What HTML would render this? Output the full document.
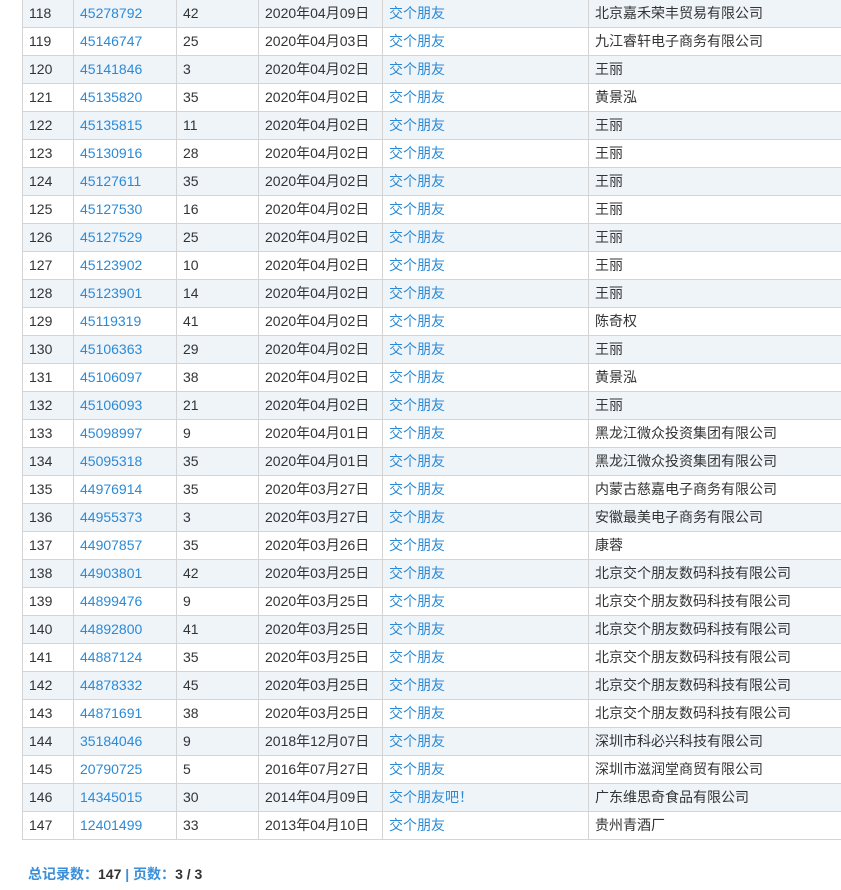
<!DOCTYPE html>
<html><head><meta charset="utf-8"><style>
body{margin:0;background:#fff;width:841px;height:890px;overflow:hidden;font-family:"Liberation Sans","Noto Sans CJK SC",sans-serif;font-size:14px;color:#333}
table{position:absolute;left:22px;top:-1px;border-collapse:collapse;table-layout:fixed;width:820px}
td{border:1px solid #d4d4d4;height:27px;padding:0 0 0 6px;line-height:27px;white-space:nowrap;overflow:hidden}
tr:nth-child(odd) td{background:#eff4f9}
a{color:#2b8ad6;text-decoration:none}
.f{position:absolute;left:28px;top:864px;font-size:14px;font-weight:bold;color:#3a8fd8}
.f b{color:#333}
</style></head><body>
<table>
<colgroup><col style="width:51px"><col style="width:103px"><col style="width:82px"><col style="width:124px"><col style="width:206px"><col></colgroup>
<tbody>
<tr><td>118</td><td><a>45278792</a></td><td>42</td><td>2020年04月09日</td><td><a>交个朋友</a></td><td>北京嘉禾荣丰贸易有限公司</td></tr>
<tr><td>119</td><td><a>45146747</a></td><td>25</td><td>2020年04月03日</td><td><a>交个朋友</a></td><td>九江睿轩电子商务有限公司</td></tr>
<tr><td>120</td><td><a>45141846</a></td><td>3</td><td>2020年04月02日</td><td><a>交个朋友</a></td><td>王丽</td></tr>
<tr><td>121</td><td><a>45135820</a></td><td>35</td><td>2020年04月02日</td><td><a>交个朋友</a></td><td>黄景泓</td></tr>
<tr><td>122</td><td><a>45135815</a></td><td>11</td><td>2020年04月02日</td><td><a>交个朋友</a></td><td>王丽</td></tr>
<tr><td>123</td><td><a>45130916</a></td><td>28</td><td>2020年04月02日</td><td><a>交个朋友</a></td><td>王丽</td></tr>
<tr><td>124</td><td><a>45127611</a></td><td>35</td><td>2020年04月02日</td><td><a>交个朋友</a></td><td>王丽</td></tr>
<tr><td>125</td><td><a>45127530</a></td><td>16</td><td>2020年04月02日</td><td><a>交个朋友</a></td><td>王丽</td></tr>
<tr><td>126</td><td><a>45127529</a></td><td>25</td><td>2020年04月02日</td><td><a>交个朋友</a></td><td>王丽</td></tr>
<tr><td>127</td><td><a>45123902</a></td><td>10</td><td>2020年04月02日</td><td><a>交个朋友</a></td><td>王丽</td></tr>
<tr><td>128</td><td><a>45123901</a></td><td>14</td><td>2020年04月02日</td><td><a>交个朋友</a></td><td>王丽</td></tr>
<tr><td>129</td><td><a>45119319</a></td><td>41</td><td>2020年04月02日</td><td><a>交个朋友</a></td><td>陈奇权</td></tr>
<tr><td>130</td><td><a>45106363</a></td><td>29</td><td>2020年04月02日</td><td><a>交个朋友</a></td><td>王丽</td></tr>
<tr><td>131</td><td><a>45106097</a></td><td>38</td><td>2020年04月02日</td><td><a>交个朋友</a></td><td>黄景泓</td></tr>
<tr><td>132</td><td><a>45106093</a></td><td>21</td><td>2020年04月02日</td><td><a>交个朋友</a></td><td>王丽</td></tr>
<tr><td>133</td><td><a>45098997</a></td><td>9</td><td>2020年04月01日</td><td><a>交个朋友</a></td><td>黑龙江微众投资集团有限公司</td></tr>
<tr><td>134</td><td><a>45095318</a></td><td>35</td><td>2020年04月01日</td><td><a>交个朋友</a></td><td>黑龙江微众投资集团有限公司</td></tr>
<tr><td>135</td><td><a>44976914</a></td><td>35</td><td>2020年03月27日</td><td><a>交个朋友</a></td><td>内蒙古慈嘉电子商务有限公司</td></tr>
<tr><td>136</td><td><a>44955373</a></td><td>3</td><td>2020年03月27日</td><td><a>交个朋友</a></td><td>安徽最美电子商务有限公司</td></tr>
<tr><td>137</td><td><a>44907857</a></td><td>35</td><td>2020年03月26日</td><td><a>交个朋友</a></td><td>康蓉</td></tr>
<tr><td>138</td><td><a>44903801</a></td><td>42</td><td>2020年03月25日</td><td><a>交个朋友</a></td><td>北京交个朋友数码科技有限公司</td></tr>
<tr><td>139</td><td><a>44899476</a></td><td>9</td><td>2020年03月25日</td><td><a>交个朋友</a></td><td>北京交个朋友数码科技有限公司</td></tr>
<tr><td>140</td><td><a>44892800</a></td><td>41</td><td>2020年03月25日</td><td><a>交个朋友</a></td><td>北京交个朋友数码科技有限公司</td></tr>
<tr><td>141</td><td><a>44887124</a></td><td>35</td><td>2020年03月25日</td><td><a>交个朋友</a></td><td>北京交个朋友数码科技有限公司</td></tr>
<tr><td>142</td><td><a>44878332</a></td><td>45</td><td>2020年03月25日</td><td><a>交个朋友</a></td><td>北京交个朋友数码科技有限公司</td></tr>
<tr><td>143</td><td><a>44871691</a></td><td>38</td><td>2020年03月25日</td><td><a>交个朋友</a></td><td>北京交个朋友数码科技有限公司</td></tr>
<tr><td>144</td><td><a>35184046</a></td><td>9</td><td>2018年12月07日</td><td><a>交个朋友</a></td><td>深圳市科必兴科技有限公司</td></tr>
<tr><td>145</td><td><a>20790725</a></td><td>5</td><td>2016年07月27日</td><td><a>交个朋友</a></td><td>深圳市滋润堂商贸有限公司</td></tr>
<tr><td>146</td><td><a>14345015</a></td><td>30</td><td>2014年04月09日</td><td><a>交个朋友吧！</a></td><td>广东维思奇食品有限公司</td></tr>
<tr><td>147</td><td><a>12401499</a></td><td>33</td><td>2013年04月10日</td><td><a>交个朋友</a></td><td>贵州青酒厂</td></tr>
</tbody></table>
<div class="f">总记录数：<b>147</b> | 页数：<b>3 / 3</b></div>
</body></html>
